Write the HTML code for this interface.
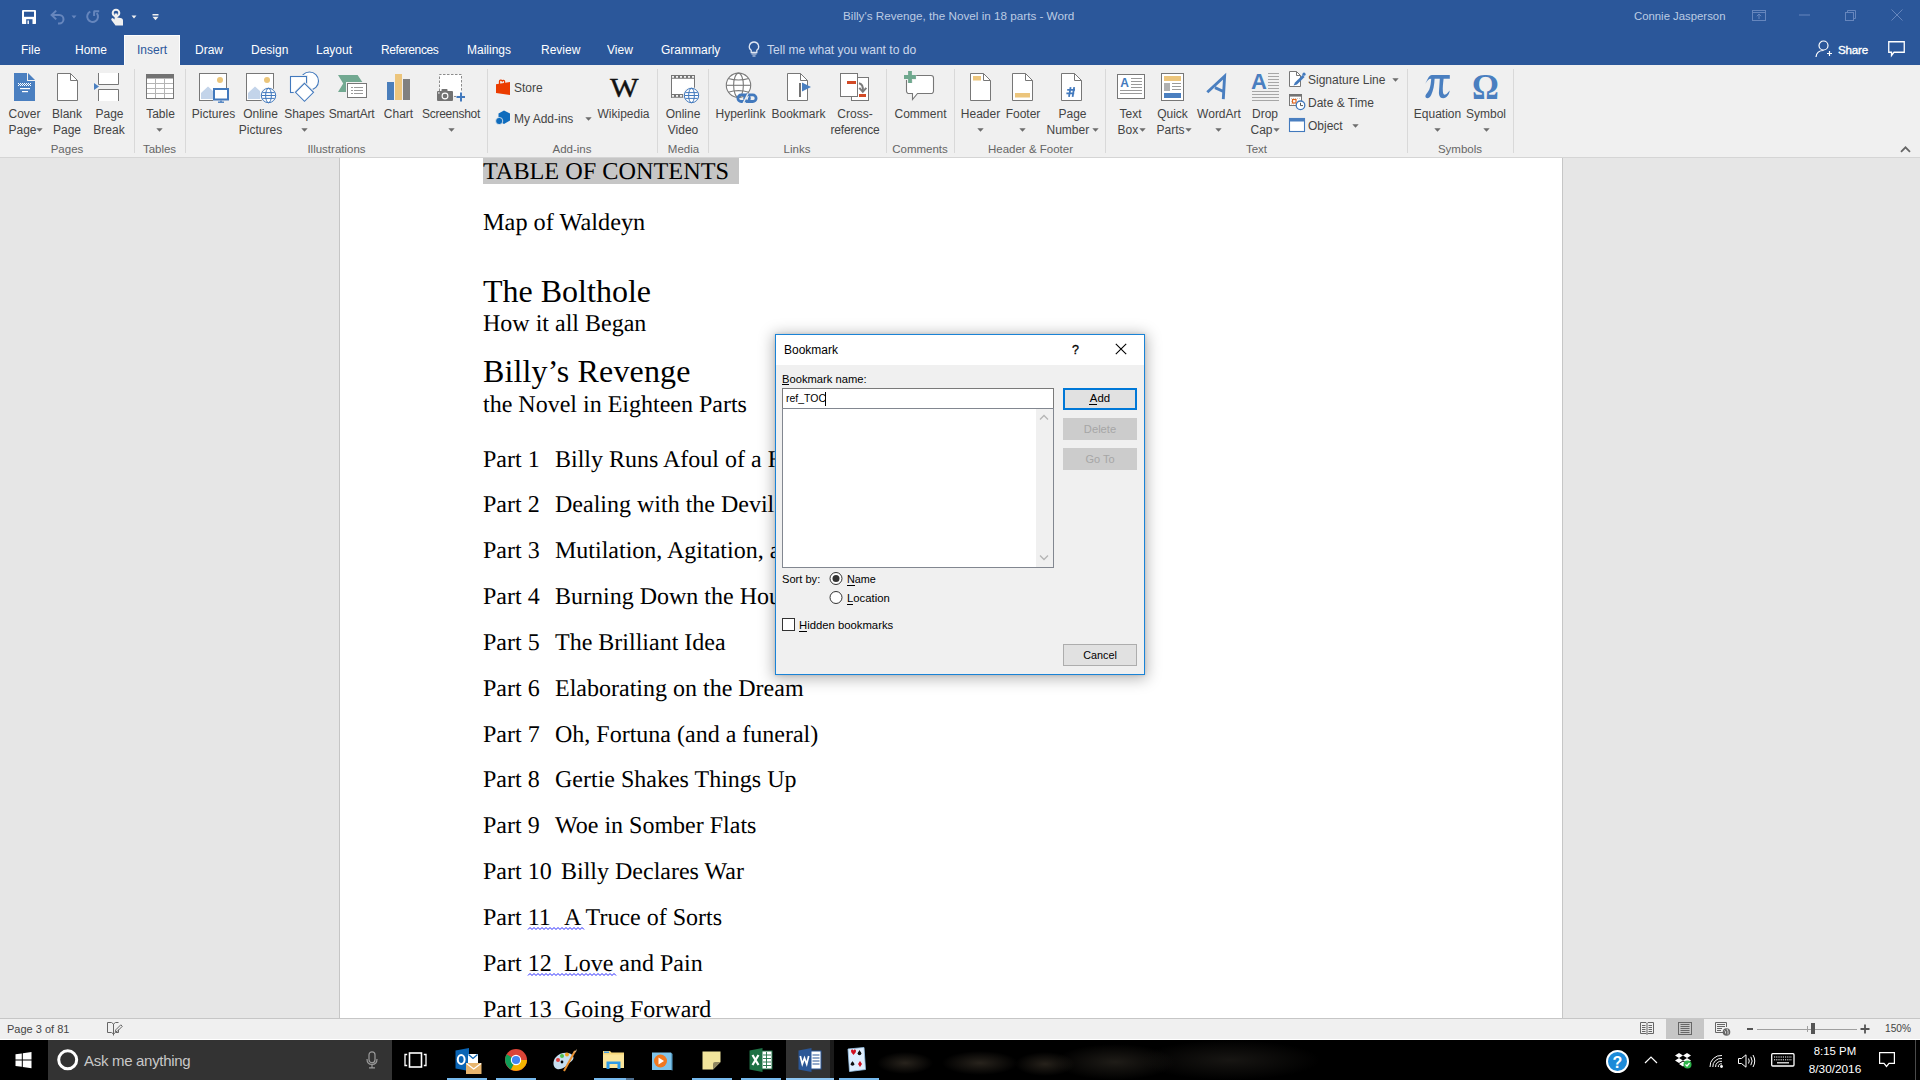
<!DOCTYPE html>
<html><head><meta charset="utf-8">
<style>
*{margin:0;padding:0;box-sizing:border-box}
html,body{width:1920px;height:1080px;overflow:hidden;background:#e6e6e6;font-family:"Liberation Sans",sans-serif;position:relative}
.a{position:absolute}
.t{position:absolute;white-space:nowrap;line-height:1}
svg{overflow:visible}
</style></head><body>

<div class="a" style="left:0px;top:0px;width:1920px;height:65px;background:#2b579a"></div>
<div class="a" style="left:0px;top:65px;width:1920px;height:92px;background:#f0f0f0"></div>
<div class="a" style="left:0px;top:157px;width:1920px;height:1px;background:#d5d5d5"></div>
<div class="a" style="left:0px;top:158px;width:1920px;height:860px;background:#e6e6e6"></div>
<div class="a" style="left:339px;top:158px;width:1px;height:860px;background:#c6c6c6"></div>
<div class="a" style="left:340px;top:158px;width:1222px;height:860px;background:#fff"></div>
<div class="a" style="left:1562px;top:158px;width:1px;height:860px;background:#c6c6c6"></div>
<div class="a" style="left:0px;top:1018px;width:1920px;height:1px;background:#c6c6c6"></div>
<div class="a" style="left:0px;top:1019px;width:1920px;height:20px;background:#f0f0f0"></div>
<div class="a" style="left:0px;top:1039px;width:1920px;height:1px;background:#fff"></div>
<div class="a" style="left:0px;top:1040px;width:1920px;height:40px;background:#000"></div>
<svg class="a" style="left:22px;top:10px;" width="14" height="14" viewBox="0 0 14 14"><path d="M0.5 0H13.5L14 0.5V13.5L13.5 14H0.5L0 13.5V0.5Z" fill="#fff"/><path d="M2 1.7H12V6.8H2Z" fill="#2b579a"/><path d="M4.2 9.2H10.5V14H4.2Z" fill="#2b579a"/><path d="M5.5 10.4H6.9V14H5.5Z" fill="#fff"/></svg>
<svg class="a" style="left:50px;top:9px;" width="16" height="15" viewBox="0 0 16 15"><path d="M2.5 6H9.2A4.3 4.3 0 0 1 9.2 14.6H8" stroke="#6686bd" stroke-width="2" fill="none"/><path d="M6.2 1.6L1.6 6L6.2 10.4" stroke="#6686bd" stroke-width="2" fill="none"/></svg>
<svg class="a" style="left:71px;top:15px;" width="6" height="4" viewBox="0 0 6 4"><path d="M0.5 0.5H5.5L3 3.5Z" fill="#6686bd"/></svg>
<svg class="a" style="left:85px;top:9px;" width="16" height="16" viewBox="0 0 16 16"><path d="M11.7 4.1A5.4 5.4 0 1 1 5.3 2.7" stroke="#6686bd" stroke-width="2" fill="none"/><path d="M8.6 2.2H14.2M9.1 2.2V7" stroke="#6686bd" stroke-width="2" fill="none"/></svg>
<svg class="a" style="left:111px;top:9px;" width="13" height="17" viewBox="0 0 13 17"><circle cx="5" cy="4" r="3.3" stroke="#f0f0f0" stroke-width="2" fill="none"/><path d="M3.6 4.5V10.5L2 9.2A1.3 1.3 0 0 0 0.4 11L4.5 16.5H12V11.5C12 9.8 11 9.2 9.5 9L6.4 8.4V4.5Z" fill="#f0f0f0"/></svg>
<svg class="a" style="left:131px;top:15px;" width="6" height="4" viewBox="0 0 6 4"><path d="M0.5 0.5H5.5L3 3.5Z" fill="#f0f0f0"/></svg>
<svg class="a" style="left:152px;top:14px;" width="7" height="7" viewBox="0 0 7 7"><path d="M0.5 0.75H6.5" stroke="#f0f0f0" stroke-width="1.5"/><path d="M0.5 2.8H6.5L3.5 6.2Z" fill="#f0f0f0"/></svg>
<div class="t" style="left:843px;top:10px;font-size:11.7px;color:#bccbe3;font-family:'Liberation Sans',sans-serif;font-weight:normal;">Billy's Revenge, the Novel in 18 parts - Word</div>
<div class="t" style="left:1634px;top:11px;font-size:11.35px;color:#bccbe3;font-family:'Liberation Sans',sans-serif;font-weight:normal;">Connie Jasperson</div>
<svg class="a" style="left:1752px;top:10px;" width="14" height="11" viewBox="0 0 14 11"><rect x="0.5" y="0.5" width="13" height="10" stroke="#6686bd" fill="none"/><path d="M0.5 2.5H13.5" stroke="#6686bd"/><path d="M7 9V4M4.8 6.2L7 4L9.2 6.2" stroke="#6686bd" fill="none"/></svg>
<svg class="a" style="left:1799px;top:14px;" width="12" height="2" viewBox="0 0 12 2"><path d="M0 1H11" stroke="#6686bd"/></svg>
<svg class="a" style="left:1845px;top:9px;" width="12" height="12" viewBox="0 0 12 12"><rect x="0.5" y="3.5" width="8" height="8" stroke="#6686bd" fill="none"/><path d="M2.5 3.5V1.5H10.5V9.5H8.5" stroke="#6686bd" fill="none"/></svg>
<svg class="a" style="left:1891px;top:9px;" width="12" height="12" viewBox="0 0 12 12"><path d="M0.5 0.5L11.5 11.5M11.5 0.5L0.5 11.5" stroke="#6686bd"/></svg>
<div class="a" style="left:124px;top:35px;width:56px;height:30px;background:#f0f0f0;border:1px solid #fdfdfd;border-bottom:none"></div>
<div class="t" style="left:21px;top:44px;font-size:12px;color:#fff;font-family:'Liberation Sans',sans-serif;font-weight:normal;">File</div>
<div class="t" style="left:75px;top:44px;font-size:12px;color:#fff;font-family:'Liberation Sans',sans-serif;font-weight:normal;">Home</div>
<div class="t" style="left:137px;top:44px;font-size:12px;color:#2b579a;font-family:'Liberation Sans',sans-serif;font-weight:normal;">Insert</div>
<div class="t" style="left:195px;top:44px;font-size:12px;color:#fff;font-family:'Liberation Sans',sans-serif;font-weight:normal;">Draw</div>
<div class="t" style="left:251px;top:44px;font-size:12px;color:#fff;font-family:'Liberation Sans',sans-serif;font-weight:normal;">Design</div>
<div class="t" style="left:316px;top:44px;font-size:12px;color:#fff;font-family:'Liberation Sans',sans-serif;font-weight:normal;">Layout</div>
<div class="t" style="left:381px;top:44px;font-size:12px;color:#fff;font-family:'Liberation Sans',sans-serif;font-weight:normal;letter-spacing:-0.4px;">References</div>
<div class="t" style="left:467px;top:44px;font-size:12px;color:#fff;font-family:'Liberation Sans',sans-serif;font-weight:normal;">Mailings</div>
<div class="t" style="left:541px;top:44px;font-size:12px;color:#fff;font-family:'Liberation Sans',sans-serif;font-weight:normal;">Review</div>
<div class="t" style="left:607px;top:44px;font-size:12px;color:#fff;font-family:'Liberation Sans',sans-serif;font-weight:normal;">View</div>
<div class="t" style="left:661px;top:44px;font-size:12px;color:#fff;font-family:'Liberation Sans',sans-serif;font-weight:normal;">Grammarly</div>
<svg class="a" style="left:748px;top:41px;" width="12" height="16" viewBox="0 0 12 16"><path d="M6 1A4.6 4.6 0 0 0 3.2 9.3V11.5H8.8V9.3A4.6 4.6 0 0 0 6 1Z" stroke="#dfe6f2" stroke-width="1.3" fill="none"/><path d="M3.5 13H8.5M4.5 15H7.5" stroke="#dfe6f2" stroke-width="1.2"/></svg>
<div class="t" style="left:767px;top:44px;font-size:12.1px;color:#cbd7ec;font-family:'Liberation Sans',sans-serif;font-weight:normal;">Tell me what you want to do</div>
<svg class="a" style="left:1815px;top:40px;" width="18" height="18" viewBox="0 0 18 18"><circle cx="8.5" cy="5.5" r="4.5" stroke="#fff" stroke-width="1.2" fill="none"/><path d="M1 17C1.5 12.5 4.5 10.5 8.5 10.5" stroke="#fff" stroke-width="1.2" fill="none"/><path d="M12 13.5H17M14.5 11V16" stroke="#fff" stroke-width="1.2"/></svg>
<div class="t" style="left:1838px;top:44px;font-size:11.6px;color:#fff;font-family:'Liberation Sans',sans-serif;font-weight:normal;-webkit-text-stroke:0.35px #fff;letter-spacing:-0.2px">Share</div>
<svg class="a" style="left:1888px;top:41px;" width="17" height="16" viewBox="0 0 17 16"><path d="M0.75 0.75H16.25V11.25H6L3.5 14.5V11.25H0.75Z" stroke="#fff" stroke-width="1.3" fill="none" stroke-linejoin="miter"/></svg>
<div class="a" style="left:134px;top:69px;width:1px;height:84px;background:#d9d9d9"></div>
<div class="a" style="left:185px;top:69px;width:1px;height:84px;background:#d9d9d9"></div>
<div class="a" style="left:487px;top:69px;width:1px;height:84px;background:#d9d9d9"></div>
<div class="a" style="left:657px;top:69px;width:1px;height:84px;background:#d9d9d9"></div>
<div class="a" style="left:708px;top:69px;width:1px;height:84px;background:#d9d9d9"></div>
<div class="a" style="left:886px;top:69px;width:1px;height:84px;background:#d9d9d9"></div>
<div class="a" style="left:954px;top:69px;width:1px;height:84px;background:#d9d9d9"></div>
<div class="a" style="left:1105px;top:69px;width:1px;height:84px;background:#d9d9d9"></div>
<div class="a" style="left:1407px;top:69px;width:1px;height:84px;background:#d9d9d9"></div>
<div class="a" style="left:1513px;top:69px;width:1px;height:84px;background:#d9d9d9"></div>
<svg class="a" style="left:14px;top:73px;" width="21" height="28" viewBox="0 0 21 28"><path d="M0 0H13V8H21V28H0Z" fill="#4a7fc0"/><path d="M14 0L21 7H14Z" fill="#4a7fc0"/><rect x="4" y="10" width="1" height="1" fill="#fff"/><rect x="6" y="10" width="1" height="1" fill="#fff"/><rect x="8" y="10" width="1" height="1" fill="#fff"/><rect x="10" y="10" width="1" height="1" fill="#fff"/><rect x="12" y="10" width="1" height="1" fill="#fff"/><rect x="14" y="10" width="1" height="1" fill="#fff"/><rect x="16" y="10" width="1" height="1" fill="#fff"/><rect x="5" y="11" width="1" height="1" fill="#fff"/><rect x="7" y="11" width="1" height="1" fill="#fff"/><rect x="9" y="11" width="1" height="1" fill="#fff"/><rect x="11" y="11" width="1" height="1" fill="#fff"/><rect x="13" y="11" width="1" height="1" fill="#fff"/><rect x="15" y="11" width="1" height="1" fill="#fff"/><rect x="4" y="12" width="1" height="1" fill="#fff"/><rect x="6" y="12" width="1" height="1" fill="#fff"/><rect x="8" y="12" width="1" height="1" fill="#fff"/><rect x="10" y="12" width="1" height="1" fill="#fff"/><rect x="12" y="12" width="1" height="1" fill="#fff"/><rect x="14" y="12" width="1" height="1" fill="#fff"/><rect x="16" y="12" width="1" height="1" fill="#fff"/><rect x="6" y="15" width="10" height="1.2" fill="#fff"/><rect x="8" y="18" width="6" height="1.2" fill="#fff"/></svg>
<svg class="a" style="left:57px;top:73px;" width="21" height="28" viewBox="0 0 21 28"><path d="M0.5 0.5H13.5L20.5 7.5V27.5H0.5Z" fill="#fff" stroke="#777"/><path d="M13.5 0.5V7.5H20.5" fill="none" stroke="#777"/></svg>
<svg class="a" style="left:94px;top:73px;" width="25" height="28" viewBox="0 0 25 28"><path d="M4.5 0V11.5H24.5V0" fill="#fff" stroke="#777"/><path d="M4.5 28V16.5H24.5V28" fill="#fff" stroke="#777"/><path d="M0 10L5 13.5L0 17Z" fill="#4a7fc0"/></svg>
<div class="t" style="left:-175.5px;width:400px;text-align:center;top:108px;font-size:12px;color:#444;font-family:'Liberation Sans',sans-serif;font-weight:normal;">Cover</div>
<div class="t" style="left:8.5px;top:124px;font-size:12px;color:#444;font-family:'Liberation Sans',sans-serif;font-weight:normal;">Page</div>
<svg class="a" style="left:36.0px;top:128px;" width="7" height="4" viewBox="0 0 7 4"><path d="M0.3 0.3H6.7L3.5 3.8Z" fill="#6d6d6d"/></svg>
<div class="t" style="left:-133px;width:400px;text-align:center;top:108px;font-size:12px;color:#444;font-family:'Liberation Sans',sans-serif;font-weight:normal;">Blank</div>
<div class="t" style="left:-133px;width:400px;text-align:center;top:124px;font-size:12px;color:#444;font-family:'Liberation Sans',sans-serif;font-weight:normal;">Page</div>
<div class="t" style="left:-90.5px;width:400px;text-align:center;top:108px;font-size:12px;color:#444;font-family:'Liberation Sans',sans-serif;font-weight:normal;">Page</div>
<div class="t" style="left:-91px;width:400px;text-align:center;top:124px;font-size:12px;color:#444;font-family:'Liberation Sans',sans-serif;font-weight:normal;">Break</div>
<div class="t" style="left:-133px;width:400px;text-align:center;top:144px;font-size:11.5px;color:#666;font-family:'Liberation Sans',sans-serif;font-weight:normal;">Pages</div>
<svg class="a" style="left:146px;top:74px;" width="28" height="25" viewBox="0 0 28 25"><rect x="0.5" y="0.5" width="27" height="24" fill="#fff" stroke="#777"/><rect x="0" y="0" width="28" height="4.5" fill="#737373"/><path d="M9.5 4.5V24M18.5 4.5V24M1 9.5H27M1 14.5H27M1 19.5H27" stroke="#b4b4b4"/></svg>
<div class="t" style="left:-39.5px;width:400px;text-align:center;top:108px;font-size:12px;color:#444;font-family:'Liberation Sans',sans-serif;font-weight:normal;">Table</div>
<svg class="a" style="left:156.0px;top:128px;" width="7" height="4" viewBox="0 0 7 4"><path d="M0.3 0.3H6.7L3.5 3.8Z" fill="#6d6d6d"/></svg>
<div class="t" style="left:-40.5px;width:400px;text-align:center;top:144px;font-size:11.5px;color:#666;font-family:'Liberation Sans',sans-serif;font-weight:normal;">Tables</div>
<svg class="a" style="left:199px;top:73px;" width="28" height="28" viewBox="0 0 28 28"><rect x="0.5" y="0.5" width="27" height="27" fill="#fff" stroke="#777"/><circle cx="21" cy="7" r="3" fill="#ebc57a"/><path d="M2 26V20L9 13.5L14 18V26Z" fill="#c3d4ea"/></svg>
<svg class="a" style="left:213px;top:88px;" width="17" height="16" viewBox="0 0 17 16"><rect x="0" y="0" width="17" height="13" fill="#f0f0f0"/><rect x="1" y="1" width="14" height="10.5" fill="#fff" stroke="#4279bd" stroke-width="2"/><path d="M5 14.2H11" stroke="#4279bd" stroke-width="1.3"/><path d="M7 13.2H9" stroke="#4279bd"/></svg>
<div class="t" style="left:13.5px;width:400px;text-align:center;top:108px;font-size:12px;color:#444;font-family:'Liberation Sans',sans-serif;font-weight:normal;">Pictures</div>
<svg class="a" style="left:246px;top:73px;" width="28" height="28" viewBox="0 0 28 28"><rect x="0.5" y="0.5" width="27" height="27" fill="#fff" stroke="#777"/><circle cx="21" cy="7" r="3" fill="#ebc57a"/><path d="M2 26V20L9 13.5L14 18V26Z" fill="#c3d4ea"/></svg>
<svg class="a" style="left:0px;top:0px;" width="1" height="1" viewBox="0 0 1 1"><circle cx="268.5" cy="95.5" r="8.6" fill="#f0f0f0"/><circle cx="268.5" cy="95.5" r="7.2" fill="#fff" stroke="#4279bd" stroke-width="1.0"/><ellipse cx="268.5" cy="95.5" rx="2.8800000000000003" ry="7.2" fill="none" stroke="#4279bd" stroke-width="1.0"/><path d="M261.3 95.5H275.7" stroke="#4279bd" stroke-width="1.0"/><path d="M262.38 92.62H274.62 M262.38 98.38H274.62" stroke="#4279bd" stroke-width="1.0"/></svg>
<div class="t" style="left:60.5px;width:400px;text-align:center;top:108px;font-size:12px;color:#444;font-family:'Liberation Sans',sans-serif;font-weight:normal;">Online</div>
<div class="t" style="left:60.5px;width:400px;text-align:center;top:124px;font-size:12px;color:#444;font-family:'Liberation Sans',sans-serif;font-weight:normal;">Pictures</div>
<svg class="a" style="left:289px;top:71px;" width="31" height="33" viewBox="0 0 31 33"><circle cx="20.5" cy="10" r="9" fill="#fff" stroke="#4279bd" stroke-width="1.1"/><rect x="1.5" y="5.5" width="16" height="16" fill="#fff" stroke="#f0f0f0" stroke-width="3"/><rect x="1.5" y="5.5" width="16" height="16" fill="#fff" stroke="#4279bd" stroke-width="1.1"/><path d="M15.5 12.3L24.5 21.3L15.5 30.3L6.5 21.3Z" fill="#fff" stroke="#f0f0f0" stroke-width="3"/><path d="M15.5 12.3L24.5 21.3L15.5 30.3L6.5 21.3Z" fill="#fff" stroke="#4279bd" stroke-width="1.1"/></svg>
<div class="t" style="left:104.5px;width:400px;text-align:center;top:108px;font-size:12px;color:#444;font-family:'Liberation Sans',sans-serif;font-weight:normal;">Shapes</div>
<svg class="a" style="left:301.0px;top:128px;" width="7" height="4" viewBox="0 0 7 4"><path d="M0.3 0.3H6.7L3.5 3.8Z" fill="#6d6d6d"/></svg>
<svg class="a" style="left:338px;top:75px;" width="30" height="24" viewBox="0 0 30 24"><path d="M0 0H19.6L25 8L19.6 17H0L5.2 8.5Z" fill="#72a991"/><rect x="9.5" y="8.5" width="19" height="14" fill="#fff" stroke="#f0f0f0" stroke-width="3"/><rect x="9.5" y="8.5" width="19" height="14" fill="#fff" stroke="#777"/><path d="M13 12.5H15M16 12.5H25M13 15.5H15M16 15.5H25M13 18.5H15M16 18.5H25" stroke="#9a9a9a"/></svg>
<div class="t" style="left:151.5px;width:400px;text-align:center;top:108px;font-size:12px;color:#444;font-family:'Liberation Sans',sans-serif;font-weight:normal;letter-spacing:-0.2px">SmartArt</div>
<svg class="a" style="left:387px;top:74px;" width="24" height="27" viewBox="0 0 24 27"><rect x="0" y="8" width="7" height="18" fill="#4a7ebb"/><rect x="8" y="0" width="7" height="26" fill="#ecc57c"/><rect x="16" y="5" width="7" height="21" fill="#808080"/></svg>
<div class="t" style="left:198.5px;width:400px;text-align:center;top:108px;font-size:12px;color:#444;font-family:'Liberation Sans',sans-serif;font-weight:normal;">Chart</div>
<svg class="a" style="left:436px;top:73px;" width="30" height="29" viewBox="0 0 30 29"><rect x="3.5" y="1.5" width="22" height="21" fill="#fff"/><path d="M3.5 18V1.5H25.5V19" fill="none" stroke="#8c8c8c" stroke-dasharray="2.5 1.5"/><path d="M18 23.5H20" stroke="#8c8c8c"/><rect x="1" y="18" width="16" height="10" rx="1" fill="#737373"/><rect x="5.5" y="16" width="6" height="3" rx="0.8" fill="#737373"/><circle cx="9" cy="23" r="2.9" fill="none" stroke="#fff" stroke-width="1.1"/><rect x="2.2" y="19.3" width="1.3" height="1.3" fill="#fff"/><path d="M20.5 24H29M25 19.5V28.5" stroke="#4279bd" stroke-width="2"/></svg>
<div class="t" style="left:251px;width:400px;text-align:center;top:108px;font-size:12px;color:#444;font-family:'Liberation Sans',sans-serif;font-weight:normal;letter-spacing:-0.25px">Screenshot</div>
<svg class="a" style="left:448.0px;top:128px;" width="7" height="4" viewBox="0 0 7 4"><path d="M0.3 0.3H6.7L3.5 3.8Z" fill="#6d6d6d"/></svg>
<div class="t" style="left:136.5px;width:400px;text-align:center;top:144px;font-size:11.5px;color:#666;font-family:'Liberation Sans',sans-serif;font-weight:normal;">Illustrations</div>
<svg class="a" style="left:495px;top:79px;" width="16" height="17" viewBox="0 0 16 17"><path d="M4.5 5V2.2C4.5 1 6.5 0.6 7.2 2C7.6 1 9.5 1 9.6 2.5V4.5" stroke="#eb3c00" stroke-width="1.3" fill="none"/><path d="M1 5.2L15 3V16L1 14Z" fill="#eb3c00"/></svg>
<div class="t" style="left:514px;top:82px;font-size:12px;color:#444;font-family:'Liberation Sans',sans-serif;font-weight:normal;">Store</div>
<svg class="a" style="left:495px;top:110px;" width="16" height="16" viewBox="0 0 16 16"><path d="M9 0.5L15 3.5V10.5L9 14L3.5 11V3.5Z" fill="#0f6cbd"/><circle cx="4.2" cy="11" r="3.6" fill="#0f6cbd" stroke="#f0f0f0" stroke-width="0.8"/></svg>
<div class="t" style="left:514px;top:113px;font-size:12px;color:#444;font-family:'Liberation Sans',sans-serif;font-weight:normal;">My Add-ins</div>
<svg class="a" style="left:585.0px;top:117px;" width="7" height="4" viewBox="0 0 7 4"><path d="M0.3 0.3H6.7L3.5 3.8Z" fill="#6d6d6d"/></svg>
<div class="t" style="left:610px;top:75px;font-family:'Liberation Serif',serif;font-size:27px;color:#111;-webkit-text-stroke:0.4px #111;transform:scaleX(1.12);transform-origin:left top">W</div>
<div class="t" style="left:423.5px;width:400px;text-align:center;top:108px;font-size:12px;color:#444;font-family:'Liberation Sans',sans-serif;font-weight:normal;">Wikipedia</div>
<div class="t" style="left:372px;width:400px;text-align:center;top:144px;font-size:11.5px;color:#666;font-family:'Liberation Sans',sans-serif;font-weight:normal;">Add-ins</div>
<svg class="a" style="left:670px;top:74px;" width="26" height="25" viewBox="0 0 26 25"><rect x="1" y="1" width="24" height="22.7" fill="#fff"/><path d="M1 1H25V4.8H1Z M1 20H25V23.7H1Z" fill="#767676"/><rect x="1" y="1" width="1" height="22.7" fill="#767676"/><rect x="24" y="1" width="1" height="22.7" fill="#767676"/><rect x="2" y="2.1" width="2" height="1.6" fill="#fff"/><rect x="6" y="2.1" width="2" height="1.6" fill="#fff"/><rect x="10" y="2.1" width="2" height="1.6" fill="#fff"/><rect x="14" y="2.1" width="2" height="1.6" fill="#fff"/><rect x="18" y="2.1" width="2" height="1.6" fill="#fff"/><rect x="22" y="2.1" width="2" height="1.6" fill="#fff"/><rect x="2" y="21.1" width="2" height="1.6" fill="#fff"/><rect x="6" y="21.1" width="2" height="1.6" fill="#fff"/><rect x="10" y="21.1" width="2" height="1.6" fill="#fff"/><rect x="14" y="21.1" width="2" height="1.6" fill="#fff"/><rect x="18" y="21.1" width="2" height="1.6" fill="#fff"/><rect x="22" y="21.1" width="2" height="1.6" fill="#fff"/></svg>
<svg class="a" style="left:0px;top:0px;" width="1" height="1" viewBox="0 0 1 1"><circle cx="691.5" cy="95.5" r="8.6" fill="#f0f0f0"/><circle cx="691.5" cy="95.5" r="7.2" fill="#fff" stroke="#4279bd" stroke-width="1.0"/><ellipse cx="691.5" cy="95.5" rx="2.8800000000000003" ry="7.2" fill="none" stroke="#4279bd" stroke-width="1.0"/><path d="M684.3 95.5H698.7" stroke="#4279bd" stroke-width="1.0"/><path d="M685.38 92.62H697.62 M685.38 98.38H697.62" stroke="#4279bd" stroke-width="1.0"/></svg>
<div class="t" style="left:483px;width:400px;text-align:center;top:108px;font-size:12px;color:#444;font-family:'Liberation Sans',sans-serif;font-weight:normal;">Online</div>
<div class="t" style="left:483px;width:400px;text-align:center;top:124px;font-size:12px;color:#444;font-family:'Liberation Sans',sans-serif;font-weight:normal;">Video</div>
<div class="t" style="left:483.5px;width:400px;text-align:center;top:144px;font-size:11.5px;color:#666;font-family:'Liberation Sans',sans-serif;font-weight:normal;">Media</div>
<svg class="a" style="left:0px;top:0px;" width="1" height="1" viewBox="0 0 1 1"><circle cx="738.5" cy="85.3" r="12.2" fill="#fff" stroke="#7a7a7a" stroke-width="1.1"/><ellipse cx="738.5" cy="85.3" rx="4.88" ry="12.2" fill="none" stroke="#7a7a7a" stroke-width="1.1"/><path d="M726.3 85.3H750.7" stroke="#7a7a7a" stroke-width="1.1"/><path d="M728.13 78.432Q738.5 81.432 748.87 78.432 M728.13 92.16799999999999Q738.5 89.16799999999999 748.87 92.16799999999999" stroke="#7a7a7a" stroke-width="1.1" fill="none"/></svg>
<svg class="a" style="left:736px;top:93px;" width="22" height="11" viewBox="0 0 22 11"><rect x="1.9" y="1.9" width="11.5" height="6.6" rx="3.3" fill="none" stroke="#4279bd" stroke-width="2.8"/><path d="M8.5 10.5L13.5 0.5" stroke="#f0f0f0" stroke-width="1.6"/><rect x="8.6" y="1.9" width="11.5" height="6.6" rx="3.3" fill="none" stroke="#4279bd" stroke-width="2.8"/><path d="M7 10.5L12 0.5" stroke="#f0f0f0" stroke-width="1.4"/></svg>
<div class="t" style="left:540.5px;width:400px;text-align:center;top:108px;font-size:12px;color:#444;font-family:'Liberation Sans',sans-serif;font-weight:normal;">Hyperlink</div>
<svg class="a" style="left:786px;top:73px;" width="26" height="28" viewBox="0 0 26 28"><path d="M1.5 0.5H14.5L21.5 7.5V27.5H1.5Z" fill="#fff" stroke="#777"/><path d="M14.5 0.5V7.5H21.5" fill="none" stroke="#777"/><path d="M14 10V24" stroke="#737373" stroke-width="2"/><path d="M16 9.5L25 14L16 18.5Z" fill="#4a7fc0"/></svg>
<div class="t" style="left:598.5px;width:400px;text-align:center;top:108px;font-size:12px;color:#444;font-family:'Liberation Sans',sans-serif;font-weight:normal;">Bookmark</div>
<svg class="a" style="left:839px;top:73px;" width="31" height="29" viewBox="0 0 31 29"><rect x="12.5" y="4.5" width="17" height="23" fill="#fff" stroke="#777"/><rect x="1.5" y="0.5" width="17" height="23" fill="#fff" stroke="#777"/><rect x="8" y="8" width="9" height="3" fill="#d24a26"/><rect x="20" y="21" width="7" height="3" fill="#d24a26"/><path d="M20 10.3C23 11 24.2 14 23.8 18" stroke="#7a7a7a" stroke-width="2" fill="none"/><path d="M20.3 14.8L23.8 18.8L27.3 14.8" stroke="#7a7a7a" stroke-width="2" fill="none"/></svg>
<div class="t" style="left:655px;width:400px;text-align:center;top:108px;font-size:12px;color:#444;font-family:'Liberation Sans',sans-serif;font-weight:normal;">Cross-</div>
<div class="t" style="left:655px;width:400px;text-align:center;top:124px;font-size:12px;color:#444;font-family:'Liberation Sans',sans-serif;font-weight:normal;letter-spacing:-0.2px">reference</div>
<div class="t" style="left:597px;width:400px;text-align:center;top:144px;font-size:11.5px;color:#666;font-family:'Liberation Sans',sans-serif;font-weight:normal;">Links</div>
<svg class="a" style="left:903px;top:70px;" width="33" height="31" viewBox="0 0 33 31"><path d="M5.5 5.5H28A2.5 2.5 0 0 1 30.5 8V21A2.5 2.5 0 0 1 28 23.5H14.5L9.5 29.5V23.5H6A2.5 2.5 0 0 1 3.5 21V8A2.5 2.5 0 0 1 6 5.5Z" fill="#fff" stroke="#777" stroke-width="1.1"/><path d="M7 0.5V13M0.8 7H13.2" stroke="#f0f0f0" stroke-width="6"/><path d="M7 1V12.9M1 7H12.9" stroke="#6fa88e" stroke-width="3.8"/></svg>
<div class="t" style="left:720.5px;width:400px;text-align:center;top:108px;font-size:12px;color:#444;font-family:'Liberation Sans',sans-serif;font-weight:normal;">Comment</div>
<div class="t" style="left:720px;width:400px;text-align:center;top:144px;font-size:11.5px;color:#666;font-family:'Liberation Sans',sans-serif;font-weight:normal;">Comments</div>
<svg class="a" style="left:970px;top:73px;" width="22" height="28" viewBox="0 0 22 28"><path d="M0.5 0.5H13.5L20.5 7.5V27.5H0.5Z" fill="#fff" stroke="#777"/><path d="M13.5 0.5V7.5H20.5" fill="none" stroke="#777"/><rect x="3" y="3" width="8" height="4.5" fill="#ecc57c"/></svg>
<div class="t" style="left:780.5px;width:400px;text-align:center;top:108px;font-size:12px;color:#444;font-family:'Liberation Sans',sans-serif;font-weight:normal;">Header</div>
<svg class="a" style="left:977.0px;top:128px;" width="7" height="4" viewBox="0 0 7 4"><path d="M0.3 0.3H6.7L3.5 3.8Z" fill="#6d6d6d"/></svg>
<svg class="a" style="left:1012px;top:73px;" width="22" height="28" viewBox="0 0 22 28"><path d="M0.5 0.5H13.5L20.5 7.5V27.5H0.5Z" fill="#fff" stroke="#777"/><path d="M13.5 0.5V7.5H20.5" fill="none" stroke="#777"/><rect x="3" y="20" width="15" height="4.5" fill="#ecc57c"/></svg>
<div class="t" style="left:823px;width:400px;text-align:center;top:108px;font-size:12px;color:#444;font-family:'Liberation Sans',sans-serif;font-weight:normal;">Footer</div>
<svg class="a" style="left:1019.0px;top:128px;" width="7" height="4" viewBox="0 0 7 4"><path d="M0.3 0.3H6.7L3.5 3.8Z" fill="#6d6d6d"/></svg>
<svg class="a" style="left:1061px;top:73px;" width="22" height="28" viewBox="0 0 22 28"><path d="M0.5 0.5H13.5L20.5 7.5V27.5H0.5Z" fill="#fff" stroke="#777"/><path d="M13.5 0.5V7.5H20.5" fill="none" stroke="#777"/><path d="M9.6 14.2L8 23.8M13.2 14.2L11.6 23.8M6.2 16.8H14M5.4 20.3H13.2" stroke="#4279bd" stroke-width="1.8" fill="none"/></svg>
<div class="t" style="left:872.5px;width:400px;text-align:center;top:108px;font-size:12px;color:#444;font-family:'Liberation Sans',sans-serif;font-weight:normal;">Page</div>
<div class="t" style="left:1046.5px;top:124px;font-size:12px;color:#444;font-family:'Liberation Sans',sans-serif;font-weight:normal;">Number</div>
<svg class="a" style="left:1092.0px;top:128px;" width="7" height="4" viewBox="0 0 7 4"><path d="M0.3 0.3H6.7L3.5 3.8Z" fill="#6d6d6d"/></svg>
<div class="t" style="left:830.5px;width:400px;text-align:center;top:144px;font-size:11.5px;color:#666;font-family:'Liberation Sans',sans-serif;font-weight:normal;">Header &amp; Footer</div>
<svg class="a" style="left:1117px;top:74px;" width="29" height="26" viewBox="0 0 29 26"><rect x="0.5" y="0.5" width="27" height="24" fill="#fff" stroke="#777"/><path d="M14 4.5H25M14 7.5H25M14 10.5H25M14 13.5H25M3 16.5H25M3 19.5H25" stroke="#9a9a9a"/><text x="3.2" y="13" font-family="Liberation Sans" font-weight="bold" font-size="12" fill="#4279bd">A</text></svg>
<div class="t" style="left:930.5px;width:400px;text-align:center;top:108px;font-size:12px;color:#444;font-family:'Liberation Sans',sans-serif;font-weight:normal;">Text</div>
<div class="t" style="left:1117.5px;top:124px;font-size:12px;color:#444;font-family:'Liberation Sans',sans-serif;font-weight:normal;">Box</div>
<svg class="a" style="left:1138.5px;top:128px;" width="7" height="4" viewBox="0 0 7 4"><path d="M0.3 0.3H6.7L3.5 3.8Z" fill="#6d6d6d"/></svg>
<svg class="a" style="left:1161px;top:73px;" width="24" height="28" viewBox="0 0 24 28"><rect x="0.5" y="0.5" width="22" height="27" fill="#fff" stroke="#777"/><rect x="3" y="3" width="17" height="5" fill="#ecc57c"/><rect x="3" y="10" width="6" height="8" fill="#b0b0b0"/><path d="M11 10.5H20M11 13.5H20M11 16.5H20" stroke="#9a9a9a"/><rect x="3" y="20" width="17" height="5" fill="#4a7fc0"/></svg>
<div class="t" style="left:972.5px;width:400px;text-align:center;top:108px;font-size:12px;color:#444;font-family:'Liberation Sans',sans-serif;font-weight:normal;">Quick</div>
<div class="t" style="left:1156.5px;top:124px;font-size:12px;color:#444;font-family:'Liberation Sans',sans-serif;font-weight:normal;">Parts</div>
<svg class="a" style="left:1184.5px;top:128px;" width="7" height="4" viewBox="0 0 7 4"><path d="M0.3 0.3H6.7L3.5 3.8Z" fill="#6d6d6d"/></svg>
<svg class="a" style="left:0px;top:0px;" width="1" height="1" viewBox="0 0 1 1"><path d="M1207.3 92.3L1224.6 76.3L1223.3 99.2M1215 87.6L1222.8 91.2" stroke="#4a7fc0" stroke-width="2.9" fill="none" stroke-linejoin="miter"/></svg>
<div class="t" style="left:1019px;width:400px;text-align:center;top:108px;font-size:12px;color:#444;font-family:'Liberation Sans',sans-serif;font-weight:normal;">WordArt</div>
<svg class="a" style="left:1215.0px;top:128px;" width="7" height="4" viewBox="0 0 7 4"><path d="M0.3 0.3H6.7L3.5 3.8Z" fill="#6d6d6d"/></svg>
<svg class="a" style="left:1251px;top:72px;" width="29" height="30" viewBox="0 0 29 30"><text x="0" y="17" font-family="Liberation Sans" font-weight="bold" font-size="22" fill="#4a7fc0">A</text><path d="M17 1.5H28M17 4.5H28M17 7.5H28M17 10.5H28M17 13.5H28M17 16.5H28M1 19.5H28M1 22.5H28M1 25.5H28M1 28.5H28" stroke="#a6a6a6"/></svg>
<div class="t" style="left:1065px;width:400px;text-align:center;top:108px;font-size:12px;color:#444;font-family:'Liberation Sans',sans-serif;font-weight:normal;">Drop</div>
<div class="t" style="left:1250.5px;top:124px;font-size:12px;color:#444;font-family:'Liberation Sans',sans-serif;font-weight:normal;">Cap</div>
<svg class="a" style="left:1273.0px;top:128px;" width="7" height="4" viewBox="0 0 7 4"><path d="M0.3 0.3H6.7L3.5 3.8Z" fill="#6d6d6d"/></svg>
<div class="t" style="left:1056.5px;width:400px;text-align:center;top:144px;font-size:11.5px;color:#666;font-family:'Liberation Sans',sans-serif;font-weight:normal;">Text</div>
<svg class="a" style="left:1288px;top:70px;" width="19" height="19" viewBox="0 0 19 19"><path d="M1.5 1.5H8.5L12.5 5.5V16.5H1.5Z" fill="#fff" stroke="#777"/><path d="M8.5 1.5V5.5H12.5" fill="none" stroke="#777"/><path d="M5.5 15.5L7 12.5L14.6 4.9L16.6 6.9L9 14.5Z" fill="#4279bd"/><circle cx="16" cy="4.2" r="1.6" fill="#4279bd"/></svg>
<div class="t" style="left:1308px;top:74px;font-size:12px;color:#444;font-family:'Liberation Sans',sans-serif;font-weight:normal;">Signature Line</div>
<svg class="a" style="left:1392.0px;top:78px;" width="7" height="4" viewBox="0 0 7 4"><path d="M0.3 0.3H6.7L3.5 3.8Z" fill="#6d6d6d"/></svg>
<svg class="a" style="left:1288px;top:93px;" width="19" height="19" viewBox="0 0 19 19"><rect x="1.5" y="1.5" width="12" height="11" fill="#fff" stroke="#777"/><rect x="1" y="1" width="13" height="2.6" fill="#737373"/><path d="M3 5.5H13M3 8.5H6M3 11H6" stroke="#c8c8c8" stroke-dasharray="1 1"/><rect x="4.5" y="6.5" width="3.5" height="3.5" fill="#fff" stroke="#e0651f" stroke-width="1.2"/><circle cx="12.5" cy="12.3" r="4.3" fill="#fff" stroke="#4279bd" stroke-width="1.3"/><path d="M12.5 9.8V12.6H15" stroke="#555" fill="none"/></svg>
<div class="t" style="left:1308px;top:97px;font-size:12px;color:#444;font-family:'Liberation Sans',sans-serif;font-weight:normal;">Date &amp; Time</div>
<svg class="a" style="left:1288px;top:117px;" width="18" height="16" viewBox="0 0 18 16"><rect x="1.5" y="1.5" width="15" height="13" fill="#fff" stroke="#4279bd" stroke-width="1.1"/><rect x="1" y="1" width="16" height="3.5" fill="#4a7fc0"/></svg>
<div class="t" style="left:1308px;top:120px;font-size:12px;color:#444;font-family:'Liberation Sans',sans-serif;font-weight:normal;">Object</div>
<svg class="a" style="left:1352.0px;top:124px;" width="7" height="4" viewBox="0 0 7 4"><path d="M0.3 0.3H6.7L3.5 3.8Z" fill="#6d6d6d"/></svg>
<svg class="a" style="left:1425px;top:75px;" width="26" height="24" viewBox="0 0 26 24"><path d="M0 9.3C2 6 3.5 0 7 0H24.8V3.8H18.6C18 9 17.6 13 17.9 16.5C18.1 19 19 20 20.4 19.6C22 19.1 23 17.2 24.8 15.5C24 19.5 22 23.2 18.2 23.2C14.6 23.2 13.6 20 14 16L14.8 3.8H9.6C9.4 10 8.2 16 6.2 20C5 22.5 3.6 23.2 2.6 23.2C1 23.2 0 22 0.5 20.5C1 19 3 17.3 4.4 14.2C5.5 11.5 6 7 6.2 3.8C3.5 3.8 2 5.8 0 9.3Z" fill="#4a7fc0"/></svg>
<div class="t" style="left:1472px;top:69px;font-family:'Liberation Serif',serif;font-weight:bold;font-size:36px;color:#4a7fc0;transform:scaleX(0.93);transform-origin:left top">&#937;</div>
<div class="t" style="left:1237.5px;width:400px;text-align:center;top:108px;font-size:12px;color:#444;font-family:'Liberation Sans',sans-serif;font-weight:normal;">Equation</div>
<svg class="a" style="left:1434.0px;top:128px;" width="7" height="4" viewBox="0 0 7 4"><path d="M0.3 0.3H6.7L3.5 3.8Z" fill="#6d6d6d"/></svg>
<div class="t" style="left:1286px;width:400px;text-align:center;top:108px;font-size:12px;color:#444;font-family:'Liberation Sans',sans-serif;font-weight:normal;">Symbol</div>
<svg class="a" style="left:1482.5px;top:128px;" width="7" height="4" viewBox="0 0 7 4"><path d="M0.3 0.3H6.7L3.5 3.8Z" fill="#6d6d6d"/></svg>
<div class="t" style="left:1260px;width:400px;text-align:center;top:144px;font-size:11.5px;color:#666;font-family:'Liberation Sans',sans-serif;font-weight:normal;">Symbols</div>
<svg class="a" style="left:1900px;top:146px;" width="11" height="7" viewBox="0 0 11 7"><path d="M1 5.8L5.5 1.3L10 5.8" stroke="#666" stroke-width="1.8" fill="none"/></svg>
<div class="a" style="left:483px;top:158px;width:256px;height:26px;background:#c6c6c6"></div>
<div class="t" style="left:483px;top:159px;font-size:24.25px;color:#000;font-family:'Liberation Serif',serif;font-weight:normal;text-rendering:geometricPrecision;margin-top:1px;">TABLE OF CONTENTS</div>
<div class="t" style="left:483px;top:210px;font-size:24.3px;color:#000;font-family:'Liberation Serif',serif;font-weight:normal;text-rendering:geometricPrecision;margin-top:1px;">Map of Waldeyn</div>
<div class="t" style="left:483px;top:275px;font-size:32px;color:#000;font-family:'Liberation Serif',serif;font-weight:normal;">The Bolthole</div>
<div class="t" style="left:483px;top:311px;font-size:24px;color:#000;font-family:'Liberation Serif',serif;font-weight:normal;text-rendering:geometricPrecision;margin-top:1px;">How it all Began</div>
<div class="t" style="left:483px;top:355px;font-size:32px;color:#000;font-family:'Liberation Serif',serif;font-weight:normal;letter-spacing:0.15px">Billy’s Revenge</div>
<div class="t" style="left:483px;top:392px;font-size:24px;color:#000;font-family:'Liberation Serif',serif;font-weight:normal;text-rendering:geometricPrecision;margin-top:1px;">the Novel in Eighteen Parts</div>
<div class="t" style="left:483px;top:447px;font-size:24px;color:#000;font-family:'Liberation Serif',serif;font-weight:normal;text-rendering:geometricPrecision;margin-top:1px;">Part 1</div>
<div class="t" style="left:555px;top:447px;font-size:24px;color:#000;font-family:'Liberation Serif',serif;font-weight:normal;text-rendering:geometricPrecision;margin-top:1px;">Billy Runs Afoul of a Hag</div>
<div class="t" style="left:483px;top:492px;font-size:24px;color:#000;font-family:'Liberation Serif',serif;font-weight:normal;text-rendering:geometricPrecision;margin-top:1px;">Part 2</div>
<div class="t" style="left:555px;top:492px;font-size:24px;color:#000;font-family:'Liberation Serif',serif;font-weight:normal;text-rendering:geometricPrecision;margin-top:1px;">Dealing with the Devil</div>
<div class="t" style="left:483px;top:538px;font-size:24px;color:#000;font-family:'Liberation Serif',serif;font-weight:normal;text-rendering:geometricPrecision;margin-top:1px;">Part 3</div>
<div class="t" style="left:555px;top:538px;font-size:24px;color:#000;font-family:'Liberation Serif',serif;font-weight:normal;text-rendering:geometricPrecision;margin-top:1px;">Mutilation, Agitation, and Ruin</div>
<div class="t" style="left:483px;top:584px;font-size:24px;color:#000;font-family:'Liberation Serif',serif;font-weight:normal;text-rendering:geometricPrecision;margin-top:1px;">Part 4</div>
<div class="t" style="left:555px;top:584px;font-size:24px;color:#000;font-family:'Liberation Serif',serif;font-weight:normal;text-rendering:geometricPrecision;margin-top:1px;">Burning Down the House</div>
<div class="t" style="left:483px;top:630px;font-size:24px;color:#000;font-family:'Liberation Serif',serif;font-weight:normal;text-rendering:geometricPrecision;margin-top:1px;">Part 5</div>
<div class="t" style="left:555px;top:630px;font-size:24px;color:#000;font-family:'Liberation Serif',serif;font-weight:normal;text-rendering:geometricPrecision;margin-top:1px;">The Brilliant Idea</div>
<div class="t" style="left:483px;top:676px;font-size:24px;color:#000;font-family:'Liberation Serif',serif;font-weight:normal;text-rendering:geometricPrecision;margin-top:1px;">Part 6</div>
<div class="t" style="left:555px;top:676px;font-size:24px;color:#000;font-family:'Liberation Serif',serif;font-weight:normal;text-rendering:geometricPrecision;margin-top:1px;">Elaborating on the Dream</div>
<div class="t" style="left:483px;top:722px;font-size:24px;color:#000;font-family:'Liberation Serif',serif;font-weight:normal;text-rendering:geometricPrecision;margin-top:1px;">Part 7</div>
<div class="t" style="left:555px;top:722px;font-size:24px;color:#000;font-family:'Liberation Serif',serif;font-weight:normal;text-rendering:geometricPrecision;margin-top:1px;">Oh, Fortuna (and a funeral)</div>
<div class="t" style="left:483px;top:767px;font-size:24px;color:#000;font-family:'Liberation Serif',serif;font-weight:normal;text-rendering:geometricPrecision;margin-top:1px;">Part 8</div>
<div class="t" style="left:555px;top:767px;font-size:24px;color:#000;font-family:'Liberation Serif',serif;font-weight:normal;text-rendering:geometricPrecision;margin-top:1px;">Gertie Shakes Things Up</div>
<div class="t" style="left:483px;top:813px;font-size:24px;color:#000;font-family:'Liberation Serif',serif;font-weight:normal;text-rendering:geometricPrecision;margin-top:1px;">Part 9</div>
<div class="t" style="left:555px;top:813px;font-size:24px;color:#000;font-family:'Liberation Serif',serif;font-weight:normal;text-rendering:geometricPrecision;margin-top:1px;">Woe in Somber Flats</div>
<div class="t" style="left:483px;top:859px;font-size:24px;color:#000;font-family:'Liberation Serif',serif;font-weight:normal;text-rendering:geometricPrecision;margin-top:1px;">Part 10</div>
<div class="t" style="left:561px;top:859px;font-size:24px;color:#000;font-family:'Liberation Serif',serif;font-weight:normal;text-rendering:geometricPrecision;margin-top:1px;">Billy Declares War</div>
<div class="t" style="left:483px;top:905px;font-size:24px;color:#000;font-family:'Liberation Serif',serif;font-weight:normal;text-rendering:geometricPrecision;margin-top:1px;">Part 11</div>
<div class="t" style="left:564px;top:905px;font-size:24px;color:#000;font-family:'Liberation Serif',serif;font-weight:normal;text-rendering:geometricPrecision;margin-top:1px;">A Truce of Sorts</div>
<div class="t" style="left:483px;top:951px;font-size:24px;color:#000;font-family:'Liberation Serif',serif;font-weight:normal;text-rendering:geometricPrecision;margin-top:1px;">Part 12</div>
<div class="t" style="left:564px;top:951px;font-size:24px;color:#000;font-family:'Liberation Serif',serif;font-weight:normal;text-rendering:geometricPrecision;margin-top:1px;">Love and Pain</div>
<div class="t" style="left:483px;top:997px;font-size:24px;color:#000;font-family:'Liberation Serif',serif;font-weight:normal;text-rendering:geometricPrecision;margin-top:1px;">Part 13</div>
<div class="t" style="left:564px;top:997px;font-size:24px;color:#000;font-family:'Liberation Serif',serif;font-weight:normal;text-rendering:geometricPrecision;margin-top:1px;">Going Forward</div>
<svg class="a" style="left:0;top:0" width="1920" height="1080"><path d="M528 929.5 L530 927.5 L532 929.5 L534 927.5 L536 929.5 L538 927.5 L540 929.5 L542 927.5 L544 929.5 L546 927.5 L548 929.5 L550 927.5 L552 929.5 L554 927.5 L556 929.5 L558 927.5 L560 929.5 L562 927.5 L564 929.5 L566 927.5 L568 929.5 L570 927.5 L572 929.5 L574 927.5 L576 929.5 L578 927.5 L580 929.5 L582 927.5 L584 929.5" stroke="#1a1aff" stroke-width="0.95" fill="none"/></svg>
<svg class="a" style="left:0;top:0" width="1920" height="1080"><path d="M528 975.5 L530 973.5 L532 975.5 L534 973.5 L536 975.5 L538 973.5 L540 975.5 L542 973.5 L544 975.5 L546 973.5 L548 975.5 L550 973.5 L552 975.5 L554 973.5 L556 975.5 L558 973.5 L560 975.5 L562 973.5 L564 975.5 L566 973.5 L568 975.5 L570 973.5 L572 975.5 L574 973.5 L576 975.5 L578 973.5 L580 975.5 L582 973.5 L584 975.5 L586 973.5 L588 975.5 L590 973.5 L592 975.5 L594 973.5 L596 975.5 L598 973.5 L600 975.5 L602 973.5 L604 975.5 L606 973.5 L608 975.5 L610 973.5 L612 975.5 L614 973.5 L616 975.5" stroke="#1a1aff" stroke-width="0.95" fill="none"/></svg>
<div class="t" style="left:7px;top:1024px;font-size:11px;color:#444;font-family:'Liberation Sans',sans-serif;font-weight:normal;">Page 3 of 81</div>
<svg class="a" style="left:106px;top:1021px;" width="17" height="16" viewBox="0 0 17 16"><path d="M1.5 1.5H5.5L7.5 3V13L5.5 11.5H1.5Z" fill="none" stroke="#666"/><path d="M7.5 3L9.5 1.5H12.5M12.5 8.5V11.5H9.5L7.5 13V14.5" fill="none" stroke="#666"/><path d="M9.3 10.8L9.8 8.8L14.8 3.8L16.3 5.3L11.3 10.3Z" fill="none" stroke="#666" stroke-width="1"/></svg>
<svg class="a" style="left:1640px;top:1022px;" width="14" height="13" viewBox="0 0 14 13"><path d="M0.5 0.5H6L7 1.5L8 0.5H13.5V11.5H8L7 12.5L6 11.5H0.5Z" fill="none" stroke="#666"/><path d="M7 1.5V12M2 3.5H5.5M2 5.5H5.5M2 7.5H5.5M2 9.5H5.5M8.5 3.5H12M8.5 5.5H12M8.5 7.5H12M8.5 9.5H12" stroke="#666"/></svg>
<div class="a" style="left:1666px;top:1019px;width:38px;height:20px;background:#c6c6c6"></div>
<svg class="a" style="left:1678px;top:1022px;" width="15" height="13" viewBox="0 0 15 13"><rect x="0.5" y="0.5" width="13" height="12" fill="none" stroke="#666"/><path d="M2.5 2.5H11.5M2.5 4.5H11.5M2.5 6.5H11.5M2.5 8.5H11.5M2.5 10.5H11.5" stroke="#666"/></svg>
<svg class="a" style="left:1715px;top:1022px;" width="16" height="14" viewBox="0 0 16 14"><path d="M8.5 10.5H0.5V0.5H11.5V5" fill="none" stroke="#666"/><path d="M2 2.5H10M2 4.5H10M2 6.5H7M2 8.5H6" stroke="#666"/><circle cx="11.5" cy="10" r="3.8" fill="#666"/><path d="M9.5 8.5Q11 9.5 10.5 11.5M12 7Q13.5 9 13 12.5" stroke="#f0f0f0" stroke-width="0.8" fill="none"/></svg>
<div class="a" style="left:1747px;top:1028px;width:6px;height:2px;background:#555"></div>
<div class="a" style="left:1757px;top:1029px;width:100px;height:1px;background:#a0a0a0"></div>
<div class="a" style="left:1807px;top:1026px;width:1px;height:6px;background:#a0a0a0"></div>
<div class="a" style="left:1811px;top:1023px;width:4px;height:11px;background:#555"></div>
<svg class="a" style="left:1860px;top:1024px;" width="10" height="10" viewBox="0 0 10 10"><path d="M0.5 5H9.5M5 0.5V9.5" stroke="#555" stroke-width="1.8"/></svg>
<div class="t" style="left:1885px;top:1024px;font-size:10.2px;color:#444;font-family:'Liberation Sans',sans-serif;font-weight:normal;">150%</div>
<div class="a" style="left:870px;top:1040px;width:460px;height:40px;background:radial-gradient(ellipse 28px 11px at 35px 23px,rgba(42,37,30,0.95),rgba(0,0,0,0)),radial-gradient(ellipse 38px 12px at 110px 23px,rgba(42,37,30,0.95),rgba(0,0,0,0)),radial-gradient(ellipse 30px 12px at 175px 24px,rgba(40,35,28,0.95),rgba(0,0,0,0)),radial-gradient(ellipse 60px 18px at 245px 22px,rgba(34,31,26,0.9),rgba(0,0,0,0)),radial-gradient(ellipse 90px 20px at 360px 20px,rgba(26,24,21,0.9),rgba(0,0,0,0))"></div>
<svg class="a" style="left:15px;top:1052px;" width="18" height="17" viewBox="0 0 18 17"><path d="M0.5 2.3L6.8 1.4V7.6H0.5Z M7.8 1.3L16.5 0V7.6H7.8Z M0.5 8.6H6.8V14.8L0.5 13.9Z M7.8 8.6H16.5V16.2L7.8 14.9Z" fill="#fff"/></svg>
<div class="a" style="left:48px;top:1040px;width:344px;height:40px;background:#333"></div>
<svg class="a" style="left:56px;top:1049px;" width="24" height="24" viewBox="0 0 24 24"><circle cx="11.7" cy="10.8" r="9" fill="none" stroke="#fff" stroke-width="3"/></svg>
<div class="t" style="left:84px;top:1053px;font-size:15px;color:#c8c8c8;font-family:'Liberation Sans',sans-serif;font-weight:normal;letter-spacing:-0.3px">Ask me anything</div>
<svg class="a" style="left:366px;top:1051px;" width="12" height="18" viewBox="0 0 12 18"><rect x="3" y="0.8" width="6" height="11" rx="3" fill="none" stroke="#9a9a9a" stroke-width="1.2"/><path d="M1 8C1 11.5 3 13.5 6 13.5C9 13.5 11 11.5 11 8M6 13.5V16.5M3 16.8H9" fill="none" stroke="#9a9a9a" stroke-width="1.2"/></svg>
<svg class="a" style="left:404px;top:1052px;" width="23" height="16" viewBox="0 0 23 16"><rect x="5.5" y="1" width="12" height="14" fill="none" stroke="#fff" stroke-width="1.6"/><path d="M3.2 2.5H1V13.5H3.2M19.8 2.5H22V13.5H19.8" fill="none" stroke="#fff" stroke-width="1.3"/></svg>
<svg class="a" style="left:455px;top:1048px;" width="27" height="27" viewBox="0 0 27 27"><path d="M0.5 2.5L14 0V23L0.5 20.5Z" fill="#0a64b4"/><rect x="13" y="6" width="10" height="9" fill="#fff"/><path d="M13.5 6.5L18 10.5L22.5 6.5" stroke="#0a64b4" stroke-width="1.2" fill="none"/><ellipse cx="6.2" cy="11.5" rx="3.4" ry="4.4" fill="none" stroke="#fff" stroke-width="2"/><rect x="11" y="15" width="15.5" height="11" fill="#e8b56e"/><path d="M11.5 15.5L18.7 21L26 15.5" stroke="#fff" stroke-width="1.2" fill="none"/></svg>
<div class="a" style="left:447px;top:1078px;width:40px;height:2px;background:#76b9ed"></div>
<svg class="a" style="left:505px;top:1049px;" width="22" height="22" viewBox="0 0 22 22"><circle cx="11" cy="11" r="11" fill="#db4437"/><path d="M11 11L1.5 5.5A11 11 0 0 0 6 20.5Z" fill="#0f9d58"/><path d="M11 11L6 20.5A11 11 0 0 0 22 11H16Z" fill="#f4b400"/><path d="M1.5 5.5L6 13.5L11 11Z" fill="#0f9d58"/><circle cx="11" cy="11" r="5.2" fill="#fff"/><circle cx="11" cy="11" r="4.1" fill="#4285f4"/></svg>
<div class="a" style="left:496px;top:1078px;width:40px;height:2px;background:#76b9ed"></div>
<svg class="a" style="left:552px;top:1048px;" width="26" height="24" viewBox="0 0 26 24"><path d="M4 9C8 4 18 3 21 8C23 12 18 14 16 16C14 19 9 22 5 21C1 20 0 13 4 9Z" fill="#c7dff0"/><circle cx="6" cy="12" r="2" fill="#e04040"/><circle cx="10" cy="8" r="2" fill="#50c050"/><circle cx="15" cy="6.5" r="2" fill="#f0a020"/><circle cx="10" cy="14" r="1.4" fill="#000"/><path d="M12 23L23 3" stroke="#e89030" stroke-width="2"/><path d="M21 5L25 1L24 4Z" fill="#d8b080"/></svg>
<svg class="a" style="left:602px;top:1050px;" width="23" height="20" viewBox="0 0 23 20"><path d="M1 1H8L9.5 2.5H22V18H1Z" fill="#f7d77a"/><rect x="1" y="4.5" width="21" height="13.5" fill="#fbe59a"/><path d="M4.5 19V11.5H18.5V19H15.5V14H7.5V19Z" fill="#2f9be6"/><rect x="2" y="1.5" width="5" height="1.5" fill="#4aa0e0"/></svg>
<div class="a" style="left:594px;top:1078px;width:32px;height:2px;background:#76b9ed"></div>
<div class="a" style="left:626px;top:1078px;width:8px;height:2px;background:#4d6f90"></div>
<svg class="a" style="left:651px;top:1051px;" width="22" height="20" viewBox="0 0 22 20"><path d="M1 1.5H20V19H1Z" fill="#7fc4ea"/><path d="M20 1.5L21.5 3V19.5L20 19Z" fill="#5aa0c8"/><circle cx="9.5" cy="10" r="6.5" fill="#f07820"/><path d="M7.5 6.5L13 10L7.5 13.5Z" fill="#fff"/></svg>
<svg class="a" style="left:702px;top:1051px;" width="19" height="19" viewBox="0 0 19 19"><path d="M0.5 0.5H18.5V11L11 18.5H0.5Z" fill="#f2e59c"/><path d="M18.5 11L11 18.5V13Q11 11 13 11Z" fill="#8f8660"/></svg>
<div class="a" style="left:692px;top:1078px;width:40px;height:2px;background:#76b9ed"></div>
<svg class="a" style="left:749px;top:1048px;" width="24" height="24" viewBox="0 0 24 24"><path d="M0.5 2.5L13.5 0V24L0.5 21.5Z" fill="#1e7145"/><rect x="13" y="3" width="10" height="18" fill="#fff" stroke="#1e7145"/><path d="M14 7H22M14 10.5H22M14 14H22M14 17.5H22M17.5 4V20" stroke="#1e7145" stroke-width="0.9"/><path d="M3.5 7L9.5 17M9.5 7L3.5 17" stroke="#fff" stroke-width="2.2"/></svg>
<div class="a" style="left:741px;top:1078px;width:40px;height:2px;background:#76b9ed"></div>
<div class="a" style="left:786px;top:1040px;width:44px;height:40px;background:#333"></div>
<div class="a" style="left:830px;top:1040px;width:4px;height:40px;background:#1b1b1b"></div>
<svg class="a" style="left:798px;top:1048px;" width="24" height="24" viewBox="0 0 24 24"><path d="M0.5 2.5L13.5 0V24L0.5 21.5Z" fill="#2b5797"/><rect x="13" y="3" width="10" height="18" fill="#fff" stroke="#2b5797"/><path d="M14.5 7H21.5M14.5 10H21.5M14.5 13H21.5M14.5 16H21.5" stroke="#2b5797" stroke-width="1.2"/><path d="M2.3 8L4.3 16L6.5 10L8.7 16L10.7 8" stroke="#fff" stroke-width="1.7" fill="none"/></svg>
<div class="a" style="left:786px;top:1078px;width:48px;height:2px;background:#8ec6f2"></div>
<svg class="a" style="left:847px;top:1047px;" width="19" height="25" viewBox="0 0 19 25"><path d="M1 2L17 0.5L18.5 22.5L2.5 24.5Z" fill="#dfefff" stroke="#9ac4e8" stroke-width="0.8"/><path d="M4 4C4 2 6.5 2 6.5 4C6.5 2 9 2 9 4C9 6 6.5 7.5 6.5 8C6.5 7.5 4 6 4 4Z" fill="#d01020"/><path d="M12.5 3L14.5 6.5H10.5Z" fill="#111"/><circle cx="12.5" cy="6.5" r="1.8" fill="#111"/><path d="M5.5 14L7.5 18H3.5Z" fill="#111"/><circle cx="5.5" cy="17" r="1.8" fill="#111"/><path d="M13 14L15 17L13 20L11 17Z" fill="#d01020"/></svg>
<div class="a" style="left:839px;top:1078px;width:40px;height:2px;background:#76b9ed"></div>
<svg class="a" style="left:1606px;top:1050px;" width="23" height="23" viewBox="0 0 23 23"><circle cx="11.5" cy="11.5" r="10.5" fill="#1c8ad8" stroke="#fff" stroke-width="2"/><text x="11.5" y="17.5" text-anchor="middle" font-family="Liberation Sans" font-weight="bold" font-size="16" fill="#fff">?</text></svg>
<svg class="a" style="left:1644px;top:1056px;" width="14" height="8" viewBox="0 0 14 8"><path d="M1 7L7 1L13 7" stroke="#fff" stroke-width="1.2" fill="none"/></svg>
<svg class="a" style="left:1675px;top:1052px;" width="17" height="17" viewBox="0 0 17 17"><path d="M4 1L8 3.5L4 6L0 3.5Z M12 1L16 3.5L12 6L8 3.5Z M4 6L8 8.5L4 11L0 8.5Z M12 6L16 8.5L12 11L8 8.5Z M4 12L8 9.5L12 12L8 14.5Z" fill="#fff"/><circle cx="12.5" cy="12.5" r="4" fill="#2db34a"/><path d="M10.5 12.5L12 14L14.5 11" stroke="#fff" stroke-width="1.2" fill="none"/></svg>
<svg class="a" style="left:1709px;top:1054px;" width="15" height="14" viewBox="0 0 15 14"><path d="M1 13A11 11 0 0 1 13 1.5M3.8 13A8.2 8.2 0 0 1 13 4.5M6.6 13A5.4 5.4 0 0 1 13 7.3M9.3 13A2.7 2.7 0 0 1 13 10" stroke="#fff" stroke-width="1" fill="none"/><circle cx="12.5" cy="12.5" r="1.4" fill="#fff"/></svg>
<svg class="a" style="left:1738px;top:1054px;" width="18" height="14" viewBox="0 0 18 14"><path d="M0.5 4.5H3.5L8 0.8V13.2L3.5 9.5H0.5Z" fill="none" stroke="#fff" stroke-width="1"/><path d="M10.5 4.5Q12 7 10.5 9.5M12.8 2.8Q15.5 7 12.8 11.2M15 1Q18.5 7 15 13" stroke="#fff" stroke-width="1" fill="none"/></svg>
<svg class="a" style="left:1771px;top:1053px;" width="24" height="14" viewBox="0 0 24 14"><rect x="0.7" y="0.7" width="22.3" height="12.3" rx="1" fill="none" stroke="#fff" stroke-width="1.3"/><path d="M3 4H21M3 6.8H21" stroke="#fff" stroke-width="1" stroke-dasharray="1.2 1"/><path d="M6 9.8H18" stroke="#fff" stroke-width="1.2"/></svg>
<div class="t" style="left:1635px;width:400px;text-align:center;top:1046px;font-size:11.4px;color:#fff;font-family:'Liberation Sans',sans-serif;font-weight:normal;">8:15 PM</div>
<div class="t" style="left:1635px;width:400px;text-align:center;top:1064px;font-size:11.8px;color:#fff;font-family:'Liberation Sans',sans-serif;font-weight:normal;">8/30/2016</div>
<svg class="a" style="left:1879px;top:1052px;" width="17" height="16" viewBox="0 0 17 16"><path d="M0.6 0.6H15.4V11.4H10L7.5 14.5L5 11.4H0.6Z" fill="none" stroke="#fff" stroke-width="1.2"/></svg>
<div class="a" style="left:1915px;top:1040px;width:1px;height:40px;background:#4a4a4a"></div>
<div class="a" style="left:775px;top:334px;width:370px;height:341px;box-shadow:0 2px 14px 2px rgba(0,0,0,0.28), 0 0 3px rgba(0,0,0,0.15)"></div>
<div class="a" style="left:775px;top:334px;width:370px;height:341px;background:#f0f0f0;border:1px solid #1a83d6"></div>
<div class="a" style="left:776px;top:335px;width:368px;height:30px;background:#fff"></div>
<div class="t" style="left:784px;top:344px;font-size:12px;color:#000;font-family:'Liberation Sans',sans-serif;font-weight:normal;">Bookmark</div>
<div class="t" style="left:1072px;top:344px;font-size:12.5px;color:#000;font-family:'Liberation Sans',sans-serif;font-weight:normal;-webkit-text-stroke:0.3px #000">?</div>
<svg class="a" style="left:1115px;top:343px;" width="12" height="12" viewBox="0 0 12 12"><path d="M0.8 0.8L11.2 11.2M11.2 0.8L0.8 11.2" stroke="#000" stroke-width="1.1"/></svg>
<div class="t" style="left:782px;top:374px;font-size:11.2px;color:#000;font-family:'Liberation Sans',sans-serif;font-weight:normal;">Bookmark name:</div>
<div class="a" style="left:782px;top:384px;width:7px;height:1px;background:#000"></div>
<div class="a" style="left:782px;top:388px;width:272px;height:21px;background:#fff;border:1px solid #7a7a7a"></div>
<div class="t" style="left:786px;top:393px;font-size:10.5px;color:#000;font-family:'Liberation Sans',sans-serif;font-weight:normal;">ref_TOC</div>
<div class="a" style="left:825px;top:392px;width:1px;height:14px;background:#000"></div>
<div class="a" style="left:782px;top:408px;width:272px;height:160px;background:#fff;border:1px solid #828790"></div>
<div class="a" style="left:1036px;top:409px;width:17px;height:158px;background:#f0f0f0"></div>
<svg class="a" style="left:1039px;top:414px;" width="10" height="7" viewBox="0 0 10 7"><path d="M1 5.5L5 1.5L9 5.5" stroke="#b5b5b5" stroke-width="1.3" fill="none"/></svg>
<svg class="a" style="left:1039px;top:554px;" width="10" height="7" viewBox="0 0 10 7"><path d="M1 1.5L5 5.5L9 1.5" stroke="#b5b5b5" stroke-width="1.3" fill="none"/></svg>
<div class="a" style="left:1063px;top:388px;width:74px;height:22px;background:#e1e1e1;border:2px solid #0078d7"></div>
<div class="t" style="left:900px;width:400px;text-align:center;top:393px;font-size:11.4px;color:#000;font-family:'Liberation Sans',sans-serif;font-weight:normal;">Add</div>
<div class="a" style="left:1089px;top:404px;width:8px;height:1px;background:#000"></div>
<div class="a" style="left:1063px;top:418px;width:74px;height:22px;background:#cccccc"></div>
<div class="t" style="left:900px;width:400px;text-align:center;top:424px;font-size:11.2px;color:#a6a6a6;font-family:'Liberation Sans',sans-serif;font-weight:normal;">Delete</div>
<div class="a" style="left:1063px;top:448px;width:74px;height:22px;background:#cccccc"></div>
<div class="t" style="left:900px;width:400px;text-align:center;top:454px;font-size:11px;color:#a6a6a6;font-family:'Liberation Sans',sans-serif;font-weight:normal;">Go To</div>
<div class="a" style="left:1063px;top:644px;width:74px;height:22px;background:#e1e1e1;border:1px solid #adadad"></div>
<div class="t" style="left:900px;width:400px;text-align:center;top:650px;font-size:10.8px;color:#000;font-family:'Liberation Sans',sans-serif;font-weight:normal;">Cancel</div>
<div class="t" style="left:782px;top:574px;font-size:11.1px;color:#000;font-family:'Liberation Sans',sans-serif;font-weight:normal;">Sort by:</div>
<svg class="a" style="left:829px;top:571px;" width="15" height="15" viewBox="0 0 15 15"><circle cx="7" cy="7.5" r="6" fill="#fff" stroke="#333" stroke-width="1"/><circle cx="7" cy="7.5" r="3.5" fill="#333"/></svg>
<div class="t" style="left:847px;top:574px;font-size:10.8px;color:#000;font-family:'Liberation Sans',sans-serif;font-weight:normal;">Name</div>
<div class="a" style="left:847px;top:585px;width:8px;height:1px;background:#000"></div>
<svg class="a" style="left:829px;top:590px;" width="15" height="15" viewBox="0 0 15 15"><circle cx="7" cy="7.5" r="6" fill="#fff" stroke="#333" stroke-width="1"/></svg>
<div class="t" style="left:847px;top:593px;font-size:11.3px;color:#000;font-family:'Liberation Sans',sans-serif;font-weight:normal;">Location</div>
<div class="a" style="left:847px;top:604px;width:6px;height:1px;background:#000"></div>
<div class="a" style="left:782px;top:618px;width:13px;height:13px;background:#fff;border:1px solid #333"></div>
<div class="t" style="left:799px;top:620px;font-size:11.3px;color:#000;font-family:'Liberation Sans',sans-serif;font-weight:normal;">Hidden bookmarks</div>
<div class="a" style="left:799px;top:631px;width:8px;height:1px;background:#000"></div>
</body></html>
